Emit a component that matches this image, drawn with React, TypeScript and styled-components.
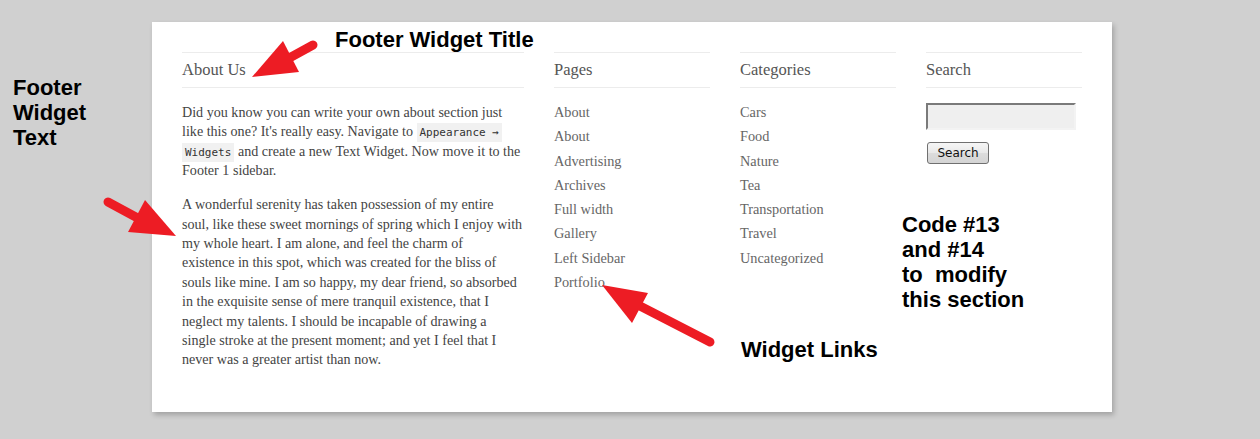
import React from "react";
import styled, { createGlobalStyle } from "styled-components";

const GlobalStyle = createGlobalStyle`
  html, body { margin: 0; padding: 0; background: #d0d0d0; }
  * { box-sizing: border-box; }
`;

const Stage = styled.div`
  position: relative;
  width: 1260px;
  height: 439px;
  padding: 22px 0 0 152px;
  overflow: hidden;
`;

const Panel = styled.footer`
  width: 960px;
  height: 390px;
  background: #fff;
  box-shadow: 2px 3px 5px rgba(0, 0, 0, 0.22);
  padding: 30px;
  display: grid;
  grid-template-columns: 342px 156px 156px 156px;
  column-gap: 30px;
  align-items: start;
  font-family: "Liberation Serif", "DejaVu Serif", serif;
  color: #444;
`;

const Widget = styled.section`
  display: flex;
  flex-direction: column;
`;

const WidgetTitle = styled.h3`
  margin: 0;
  padding: 7px 0;
  line-height: 20px;
  font-size: 16.5px;
  font-weight: normal;
  color: #555;
  border-top: 1px solid #ececec;
  border-bottom: 1px solid #ececec;
`;

const Body = styled.div`
  margin-top: 15px;
`;

const Para = styled.p`
  margin: 0 0 14.5px;
  font-size: 14.1px;
  line-height: 19.4px;
`;

const Line = styled.span`
  display: block;
  white-space: nowrap;
`;

const Code = styled.code`
  font-family: "DejaVu Sans Mono", "Liberation Mono", monospace;
  font-size: 11px;
  line-height: 1;
  background: #f1f1f1;
  padding: 3px 3px;
  color: #333;
`;

const LinkList = styled.ul`
  list-style: none;
  margin: 12px 0 0;
  padding: 0;
`;

const LinkItem = styled.li`
  font-size: 14.3px;
  line-height: 24.25px;
`;

const Link = styled.a`
  color: #666;
  text-decoration: none;
`;

const SearchForm = styled.form`
  margin-top: 15px;
  display: flex;
  flex-direction: column;
  align-items: flex-start;
  gap: 12px;
`;

const SearchInput = styled.input`
  width: 150px;
  height: 27px;
  background: #efefef;
  border: 2px solid #f3f3f3;
  border-top-color: #7a7a7a;
  border-left-color: #7a7a7a;
  padding: 0 4px;
  outline: none;
`;

const SearchButton = styled.button`
  margin-left: 1px;
  width: 62px;
  height: 22px;
  padding: 0;
  font-family: "DejaVu Sans", Verdana, sans-serif;
  font-size: 12px;
  color: #111;
  border: 1px solid #707070;
  border-radius: 3px;
  background: linear-gradient(#f6f6f6, #e8e8e8 50%, #dcdcdc 51%, #d4d4d4);
`;

const Note = styled.div<{ $left: number; $top: number }>`
  position: absolute;
  left: ${(p) => p.$left}px;
  top: ${(p) => p.$top}px;
  font-family: "Liberation Sans", Arial, sans-serif;
  font-weight: bold;
  font-size: 22px;
  line-height: 25px;
  color: #000;
  white-space: pre;
`;

const Overlay = styled.svg`
  position: absolute;
  left: 0;
  top: 0;
  pointer-events: none;
`;

const RED = "#ed1c24";

const pages = ["About", "About", "Advertising", "Archives", "Full width", "Gallery", "Left Sidebar", "Portfolio"];
const categories = ["Cars", "Food", "Nature", "Tea", "Transportation", "Travel", "Uncategorized"];

const serenity = [
  "A wonderful serenity has taken possession of my entire",
  "soul, like these sweet mornings of spring which I enjoy with",
  "my whole heart. I am alone, and feel the charm of",
  "existence in this spot, which was created for the bliss of",
  "souls like mine. I am so happy, my dear friend, so absorbed",
  "in the exquisite sense of mere tranquil existence, that I",
  "neglect my talents. I should be incapable of drawing a",
  "single stroke at the present moment; and yet I feel that I",
  "never was a greater artist than now.",
];

export default function App() {
  return (
    <>
      <GlobalStyle />
      <Stage>
        <Panel>
          <Widget>
            <WidgetTitle>About Us</WidgetTitle>
            <Body>
              <Para>
                Did you know you can write your own about section just like this one? It's really easy. Navigate to{" "}
                <Code>Appearance →</Code> <Code>Widgets</Code> and create a new Text Widget. Now move it to the Footer 1
                sidebar.
              </Para>
              <Para>
                {serenity.map((l, i) => (
                  <Line key={i}>{l}</Line>
                ))}
              </Para>
            </Body>
          </Widget>
          <Widget>
            <WidgetTitle>Pages</WidgetTitle>
            <LinkList>
              {pages.map((p, i) => (
                <LinkItem key={i}>
                  <Link href="#">{p}</Link>
                </LinkItem>
              ))}
            </LinkList>
          </Widget>
          <Widget>
            <WidgetTitle>Categories</WidgetTitle>
            <LinkList>
              {categories.map((c) => (
                <LinkItem key={c}>
                  <Link href="#">{c}</Link>
                </LinkItem>
              ))}
            </LinkList>
          </Widget>
          <Widget>
            <WidgetTitle>Search</WidgetTitle>
            <SearchForm onSubmit={(e) => e.preventDefault()}>
              <SearchInput type="text" />
              <SearchButton type="submit">Search</SearchButton>
            </SearchForm>
          </Widget>
        </Panel>

        <Note $left={335} $top={27}>Footer Widget Title</Note>
        <Note $left={13} $top={75}>{"Footer\nWidget\nText"}</Note>
        <Note $left={902} $top={212}>{"Code #13\nand #14\nto  modify\nthis section"}</Note>
        <Note $left={741} $top={337}>Widget Links</Note>

        <Overlay width={1260} height={439} viewBox="0 0 1260 439">
          <g fill={RED} stroke={RED} strokeLinecap="round">
            <line x1={313} y1={45} x2={282} y2={62} strokeWidth={9} />
            <polygon points="252,77 283,41 299,72" stroke="none" />
            <line x1={108} y1={202} x2={145} y2={222} strokeWidth={9} />
            <polygon points="176,236 145,200 128,232" stroke="none" />
            <line x1={710} y1={342} x2={640} y2={306} strokeWidth={9} />
            <polygon points="602,285 648,293 632,323" stroke="none" />
          </g>
        </Overlay>
      </Stage>
    </>
  );
}
